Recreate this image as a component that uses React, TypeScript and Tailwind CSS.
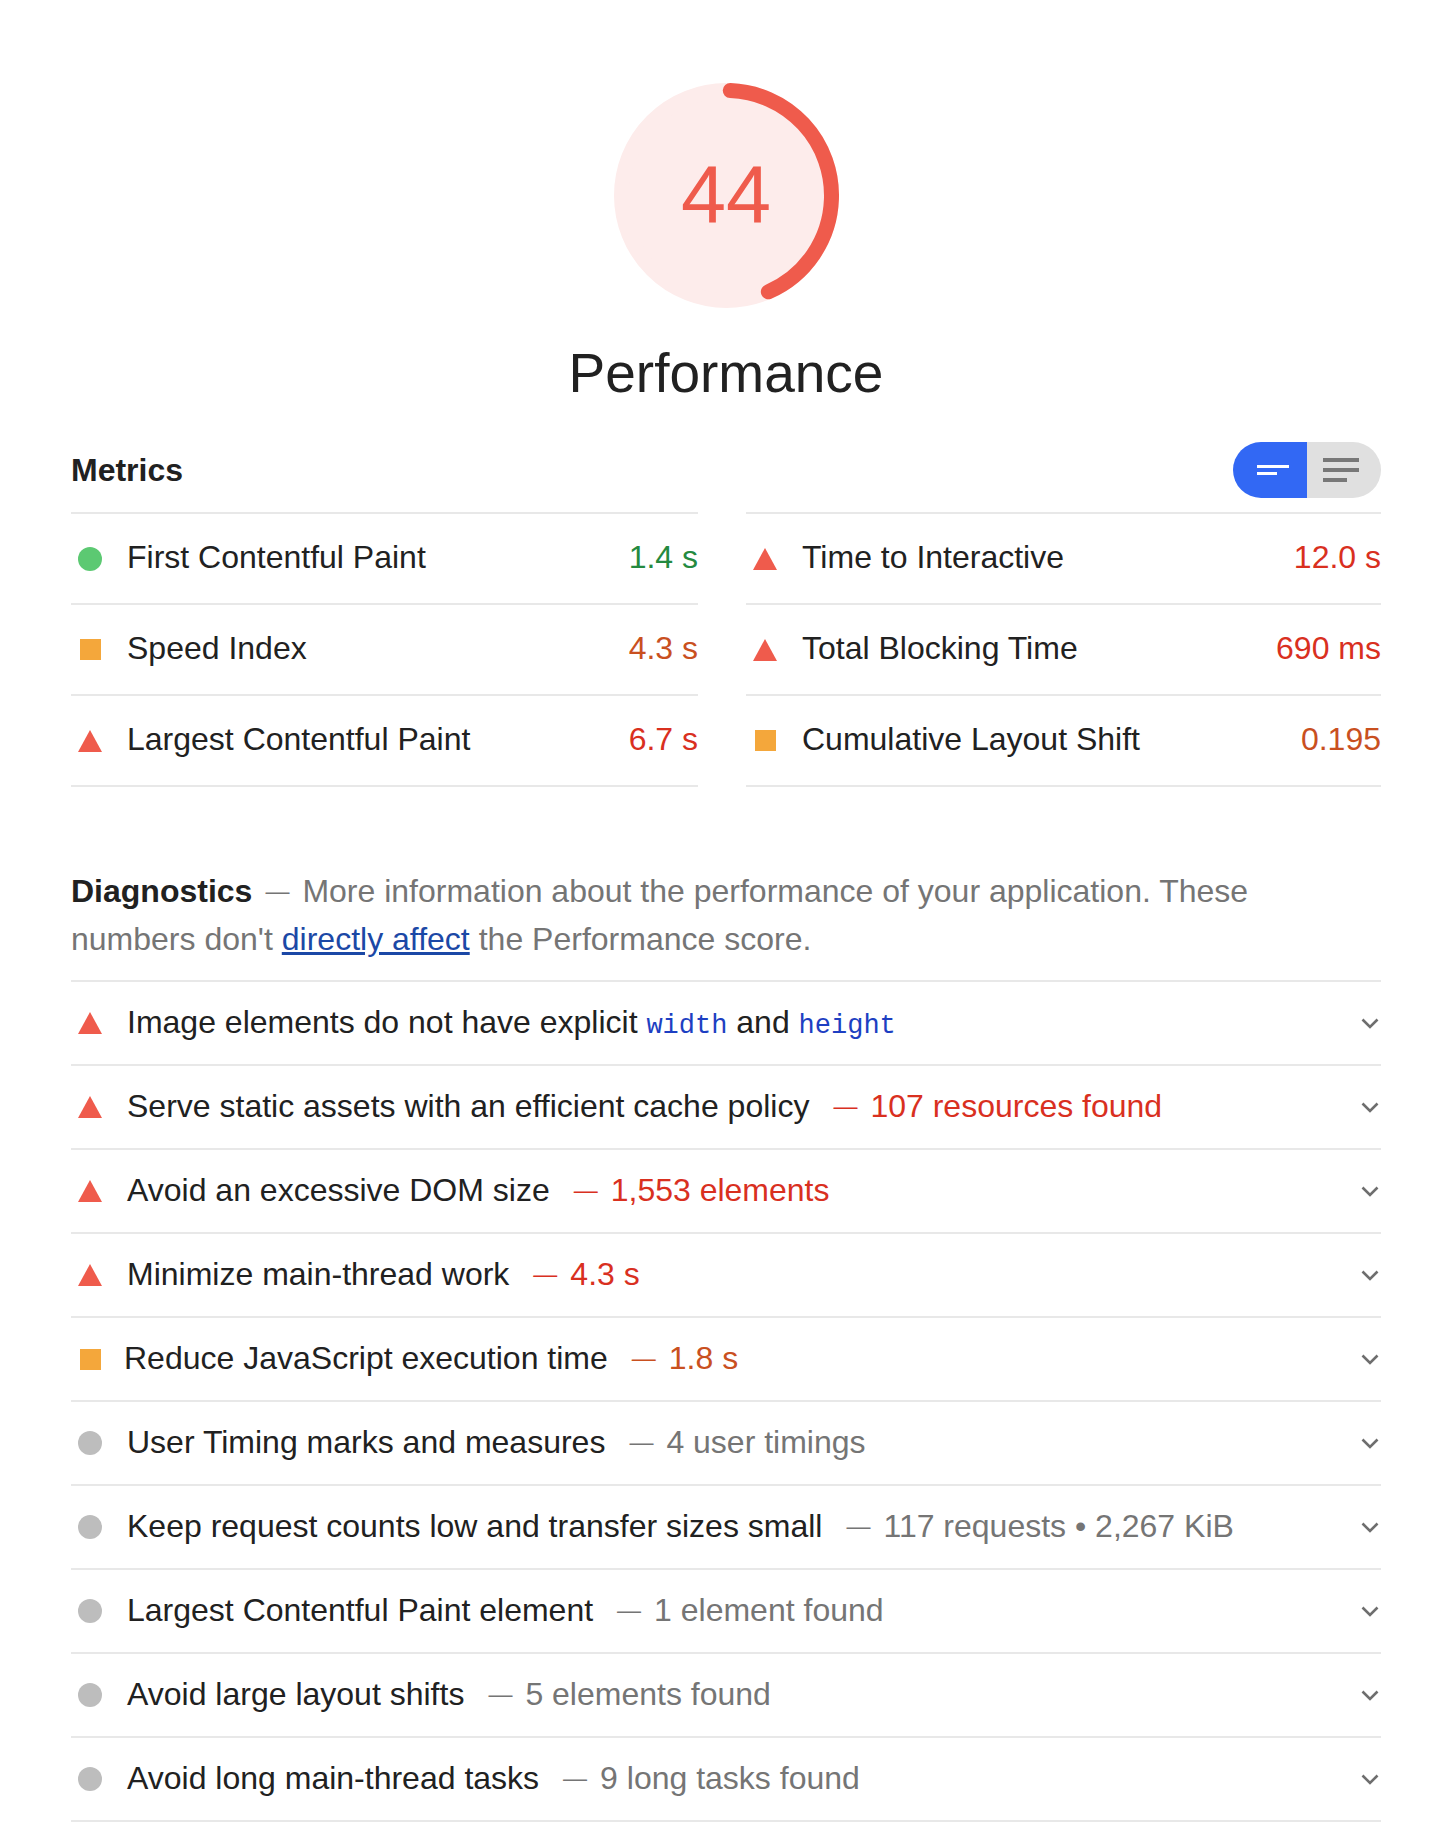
const FONT = "font-['Liberation_Sans',Arial,Helvetica,sans-serif]";

type Rating = "pass" | "average" | "fail" | "info";

const valueColor: Record<Rating, string> = {
  pass: "text-[#248a40]",
  average: "text-[#c9501f]",
  fail: "text-[#d9301f]",
  info: "text-[#757575]",
};

function RatingIcon({ rating }: { rating: Rating }) {
  if (rating === "pass")
    return <span className="block w-[24px] h-[24px] rounded-full bg-[#5cc972]" />;
  if (rating === "info")
    return <span className="block w-[24px] h-[24px] rounded-full bg-[#bdbdbd]" />;
  if (rating === "average")
    return <span className="block w-[21px] h-[21px] bg-[#f4a73b]" />;
  return (
    <svg width="24" height="22" viewBox="0 0 24 22">
      <polygon points="12,0 24,22 0,22" fill="#ef5b4c" />
    </svg>
  );
}

function Gauge({ score }: { score: number }) {
  const circ = 2 * Math.PI * 56;
  const arc = (score / 100) * circ - 4;
  return (
    <div className="relative w-[225px] h-[225px]">
      <svg width="225" height="225" viewBox="0 0 120 120">
        <circle cx="60" cy="60" r="56" fill="#fdeceb" stroke="#fdeceb" strokeWidth="8" />
        <circle
          cx="60"
          cy="60"
          r="56"
          fill="none"
          stroke="#ef5b4c"
          strokeWidth="8"
          strokeLinecap="round"
          strokeDasharray={`${arc} ${circ}`}
          transform="rotate(-87.95 60 60)"
        />
      </svg>
      <div className="absolute inset-0 flex items-center justify-center text-[81px] leading-none text-[#ef5b4c]">
        {score}
      </div>
    </div>
  );
}

function Toggle() {
  return (
    <div className="flex w-[148px] h-[56px] rounded-full overflow-hidden">
      <div className="w-[74px] h-full bg-[#3268f4]">
        <svg width="74" height="56" viewBox="0 0 74 56">
          <rect x="24" y="23" width="32" height="3" fill="#fff" />
          <rect x="24" y="30" width="20" height="3" fill="#fff" />
        </svg>
      </div>
      <div className="w-[74px] h-full bg-[#e0e0e0]">
        <svg width="74" height="56" viewBox="0 0 74 56">
          <rect x="16" y="16" width="36" height="4" fill="#787878" />
          <rect x="16" y="26" width="36" height="4" fill="#787878" />
          <rect x="16" y="36" width="24" height="4" fill="#787878" />
        </svg>
      </div>
    </div>
  );
}

const metricsLeft: [string, string, Rating][] = [
  ["First Contentful Paint", "1.4 s", "pass"],
  ["Speed Index", "4.3 s", "average"],
  ["Largest Contentful Paint", "6.7 s", "fail"],
];

const metricsRight: [string, string, Rating][] = [
  ["Time to Interactive", "12.0 s", "fail"],
  ["Total Blocking Time", "690 ms", "fail"],
  ["Cumulative Layout Shift", "0.195", "average"],
];

function MetricColumn({ items }: { items: [string, string, Rating][] }) {
  return (
    <div className="border-t-2 border-[#e8e8e8]">
      {items.map(([title, value, rating]) => (
        <div key={title} className="flex items-center h-[89px] border-b-2 border-[#e8e8e8] box-content">
          <div className="ml-[7px] w-[24px] flex justify-center">
            <RatingIcon rating={rating} />
          </div>
          <div className="ml-[25px] flex-1 flex justify-between pb-[4px]">
            <span className="text-[#212121]">{title}</span>
            <span className={valueColor[rating]}>{value}</span>
          </div>
        </div>
      ))}
    </div>
  );
}

function Chevron() {
  return (
    <svg width="18" height="11" viewBox="0 0 18 11">
      <polyline points="1.5,1.5 9,9 16.5,1.5" fill="none" stroke="#6e6e6e" strokeWidth="2.6" />
    </svg>
  );
}

function Code({ children }: { children: string }) {
  return (
    <code className="font-['Liberation_Mono','Courier_New',monospace] text-[27px] text-[#1d3fc2]">
      {children}
    </code>
  );
}

const diagnostics: { title: React.ReactNode; value?: string; rating: Rating }[] = [
  {
    title: (
      <>
        Image elements do not have explicit <Code>width</Code> and <Code>height</Code>
      </>
    ),
    rating: "fail",
  },
  { title: "Serve static assets with an efficient cache policy", value: "107 resources found", rating: "fail" },
  { title: "Avoid an excessive DOM size", value: "1,553 elements", rating: "fail" },
  { title: "Minimize main-thread work", value: "4.3 s", rating: "fail" },
  { title: "Reduce JavaScript execution time", value: "1.8 s", rating: "average" },
  { title: "User Timing marks and measures", value: "4 user timings", rating: "info" },
  { title: "Keep request counts low and transfer sizes small", value: "117 requests • 2,267 KiB", rating: "info" },
  { title: "Largest Contentful Paint element", value: "1 element found", rating: "info" },
  { title: "Avoid large layout shifts", value: "5 elements found", rating: "info" },
  { title: "Avoid long main-thread tasks", value: "9 long tasks found", rating: "info" },
];

export default function App() {
  return (
    <div className={`${FONT} bg-white w-[1448px] min-h-[1846px] pl-[71px] pr-[67px] pt-[83px] pb-[24px] text-[32px]`}>
      <div className="flex flex-col items-center">
        <Gauge score={44} />
        <div className="mt-[32px] text-[55px] leading-[66px] text-[#212121]">Performance</div>
      </div>

      <div className="mt-[36px] flex items-center justify-between h-[56px]">
        <div className="font-bold text-[#212121] leading-none">Metrics</div>
        <Toggle />
      </div>

      <div className="mt-[14px] grid grid-cols-[627px_635px] justify-between">
        <MetricColumn items={metricsLeft} />
        <MetricColumn items={metricsRight} />
      </div>

      <div className="mt-[80px] leading-[48px] text-[#757575] pb-[17px] whitespace-nowrap">
        <div className="flex items-baseline h-[48px]">
          <span className="font-bold text-[#212121]">Diagnostics</span>
          <span className="text-[24px] leading-none mx-[13px] relative -top-[3px]">—</span>
          <span>More information about the performance of your application. These</span>
        </div>
        <div className="flex items-baseline h-[48px]">
          <span>numbers don't</span>
          <a href="#" className="ml-[9px] text-[#1b48a6] underline">
            directly affect
          </a>
          <span className="ml-[9px]">the Performance score.</span>
        </div>
      </div>

      <div className="border-t-2 border-[#e8e8e8]">
        {diagnostics.map((d, i) => (
          <div key={i} className="flex items-center h-[82px] border-b-2 border-[#e8e8e8] box-content">
            <div className="ml-[7px] w-[24px] flex justify-center">
              <RatingIcon rating={d.rating} />
            </div>
            <div className={`${d.rating === "average" ? "ml-[22px]" : "ml-[25px]"} flex-1 flex items-center whitespace-nowrap pb-[2px]`}>
              <span className="text-[#212121]">{d.title}</span>
              {d.value && (
                <span className={`ml-[24px] ${valueColor[d.rating]}`}>
                  <span className="text-[24px] mr-[13px] align-[3px]">—</span>
                  {d.value}
                </span>
              )}
            </div>
            <div className="mr-[2px] flex items-center">
              <Chevron />
            </div>
          </div>
        ))}
      </div>
    </div>
  );
}
